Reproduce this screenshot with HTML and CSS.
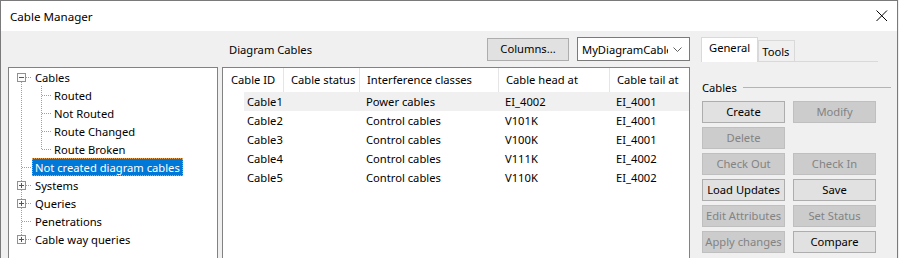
FILE: index.html
```html
<!DOCTYPE html>
<html>
<head>
<meta charset="utf-8">
<title>Cable Manager</title>
<link rel="stylesheet" href="styles.css">
</head>
<body>
<div class="window">
    <div class="titlebar">
        <span class="title">Cable Manager</span>
        <svg class="close" width="12" height="12" viewBox="0 0 12 12">
            <path d="M0.5 0.5 L11 11 M11 0.5 L0.5 11" stroke="#000" stroke-width="1"/>
        </svg>
    </div>
    <div class="client">
        <div class="main">
            <div class="toolbar">
                <span class="caption">Diagram Cables</span>
                <span class="spacer"></span>
                <button class="btn columns">Columns...</button>
                <div class="combo">
                    <span class="combo-text">MyDiagramCables</span>
                    <svg class="chevron" width="9" height="5" viewBox="0 0 9 5">
                        <path d="M0.5 0.5 L4.5 4.5 L8.5 0.5" fill="none" stroke="#606060"/>
                    </svg>
                </div>
            </div>
            <div class="panes">
                <div class="tree">
                    <!-- connector lines and expander boxes -->
                    <svg class="tree-lines" width="60" height="190">
                        <g stroke="#a0a0a0" stroke-dasharray="1 1" shape-rendering="crispEdges">
                            <line x1="12.5" y1="14" x2="12.5" y2="172"/>
                            <line x1="32.5" y1="18" x2="32.5" y2="82"/>
                            <line x1="17" y1="9.5" x2="23" y2="9.5"/>
                            <line x1="33" y1="27.5" x2="42" y2="27.5"/>
                            <line x1="33" y1="45.5" x2="42" y2="45.5"/>
                            <line x1="33" y1="63.5" x2="42" y2="63.5"/>
                            <line x1="33" y1="81.5" x2="42" y2="81.5"/>
                            <line x1="13" y1="99.5" x2="23" y2="99.5"/>
                            <line x1="17" y1="117.5" x2="23" y2="117.5"/>
                            <line x1="17" y1="135.5" x2="23" y2="135.5"/>
                            <line x1="13" y1="153.5" x2="23" y2="153.5"/>
                            <line x1="17" y1="171.5" x2="23" y2="171.5"/>
                        </g>
                        <g fill="#fcfcfc" stroke="#919191" shape-rendering="crispEdges">
                            <rect x="8.5" y="5.5" width="8" height="8"/>
                            <rect x="8.5" y="113.5" width="8" height="8"/>
                            <rect x="8.5" y="131.5" width="8" height="8"/>
                            <rect x="8.5" y="167.5" width="8" height="8"/>
                        </g>
                        <g stroke="#3a5a8a" shape-rendering="crispEdges">
                            <line x1="10" y1="9.5" x2="15" y2="9.5"/>
                            <line x1="10" y1="117.5" x2="15" y2="117.5"/>
                            <line x1="12.5" y1="115" x2="12.5" y2="120"/>
                            <line x1="10" y1="135.5" x2="15" y2="135.5"/>
                            <line x1="12.5" y1="133" x2="12.5" y2="138"/>
                            <line x1="10" y1="171.5" x2="15" y2="171.5"/>
                            <line x1="12.5" y1="169" x2="12.5" y2="174"/>
                        </g>
                    </svg>
                    <div class="node"><span class="label">Cables</span></div>
                    <div class="node child"><span class="label">Routed</span></div>
                    <div class="node child"><span class="label">Not Routed</span></div>
                    <div class="node child"><span class="label">Route Changed</span></div>
                    <div class="node child"><span class="label">Route Broken</span></div>
                    <div class="node"><span class="label selected">Not created diagram cables</span></div>
                    <div class="node"><span class="label">Systems</span></div>
                    <div class="node"><span class="label">Queries</span></div>
                    <div class="node"><span class="label">Penetrations</span></div>
                    <div class="node"><span class="label">Cable way queries</span></div>
                </div>
                <div class="list">
                    <div class="list-head">
                        <span class="col first">Cable ID</span>
                        <span class="col">Cable status</span>
                        <span class="col">Interference classes</span>
                        <span class="col">Cable head at</span>
                        <span class="col">Cable tail at</span>
                    </div>
                    <div class="list-row hot">
                        <span class="cell first">Cable1</span><span class="cell"></span>
                        <span class="cell">Power cables</span><span class="cell">EI_4002</span><span class="cell">EI_4001</span>
                    </div>
                    <div class="list-row">
                        <span class="cell first">Cable2</span><span class="cell"></span>
                        <span class="cell">Control cables</span><span class="cell">V101K</span><span class="cell">EI_4001</span>
                    </div>
                    <div class="list-row">
                        <span class="cell first">Cable3</span><span class="cell"></span>
                        <span class="cell">Control cables</span><span class="cell">V100K</span><span class="cell">EI_4001</span>
                    </div>
                    <div class="list-row">
                        <span class="cell first">Cable4</span><span class="cell"></span>
                        <span class="cell">Control cables</span><span class="cell">V111K</span><span class="cell">EI_4002</span>
                    </div>
                    <div class="list-row">
                        <span class="cell first">Cable5</span><span class="cell"></span>
                        <span class="cell">Control cables</span><span class="cell">V110K</span><span class="cell">EI_4002</span>
                    </div>
                </div>
            </div>
        </div>
        <div class="side">
            <div class="tabs">
                <span class="tab active">General</span>
                <span class="tab">Tools</span>
                <span class="tab-fill"></span>
            </div>
            <div class="group">
                <span>Cables</span>
                <span class="rule"></span>
            </div>
            <div class="buttons">
                <button class="btn">Create</button>
                <button class="btn" disabled>Modify</button>
                <button class="btn" disabled>Delete</button>
                <span></span>
                <button class="btn" disabled>Check Out</button>
                <button class="btn" disabled>Check In</button>
                <button class="btn">Load Updates</button>
                <button class="btn">Save</button>
                <button class="btn" disabled>Edit Attributes</button>
                <button class="btn" disabled>Set Status</button>
                <button class="btn" disabled>Apply changes</button>
                <button class="btn">Compare</button>
            </div>
        </div>
    </div>
</div>
</body>
</html>
```

FILE: styles.css
```css
body{
    margin:0;
    font-family:"Noto Sans", "DejaVu Sans", sans-serif;
    font-size:11.2px;
    color:#000;
    background-color:#f0f0f0;
    overflow:hidden;
}

.window{
    width:898px;
    height:300px;
    box-sizing:border-box;
    border:1px solid #7a7a7a;
    border-bottom:none;
    background-color:#f0f0f0;
}

.titlebar{
    height:30px;
    background-color:#fff;
    display:flex;
    align-items:center;
    padding-left:9px;
    padding-right:9px;
    font-size:11.6px;
}

.title{
    flex:1;
}

.close{
    display:block;
}

.client{
    display:flex;
    padding-left:7px;
}

.main{
    width:682px;
}

.toolbar{
    height:36px;
    display:flex;
    align-items:center;
}

.caption{
    margin-left:221px;
}

.spacer{
    flex:1;
}

.btn{
    font:inherit;
    color:#000;
    background-color:#e1e1e1;
    border:1px solid #adadad;
    height:22px;
    padding:0;
    margin:0;
    line-height:18px;
    white-space:nowrap;
}

.btn:disabled{
    background-color:#cccccc;
    border-color:#bfbfbf;
    color:#838383;
}

.columns{
    width:82px;
    height:23px;
    margin-right:8px;
}

.combo{
    width:113px;
    height:24px;
    box-sizing:border-box;
    background-color:#fff;
    border:1px solid #7a7a7a;
    display:flex;
    align-items:center;
    padding-left:4px;
}

.combo-text{
    width:86px;
    overflow:hidden;
    white-space:nowrap;
}

.chevron{
    margin-left:5px;
}

.panes{
    display:flex;
    gap:4px;
    height:200px;
}

.tree{
    width:210px;
    box-sizing:border-box;
    border:1px solid #828282;
    background-color:#fff;
    position:relative;
}

.tree-lines{
    position:absolute;
    left:0;
    top:0;
}

.node{
    height:18px;
    display:flex;
    align-items:center;
    padding-left:23px;
    position:relative;
}

.node.child{
    padding-left:42px;
}

.label{
    padding:0 2px;
    height:18px;
    line-height:17px;
    box-sizing:border-box;
    border:1px solid transparent;
    white-space:nowrap;
}

.label.selected{
    background-color:#0078d7;
    color:#fff;
    border:1px dotted #e8a050;
}

.list{
    width:468px;
    box-sizing:border-box;
    border:1px solid #828282;
    background-color:#fff;
}

.list-head, .list-row{
    display:grid;
    grid-template-columns:60px 76px 139px 111px 1fr;
}

.list-head{
    height:24px;
    line-height:23px;
}

.col{
    padding-left:7px;
    border-left:1px solid #e5e5e5;
    white-space:nowrap;
    overflow:hidden;
}

.col.first{
    padding-left:8px;
    border-left:none;
}

.list-row{
    height:19px;
    line-height:19px;
}

.list-row.hot{
    background:linear-gradient(to right, transparent 21px, #f0f0f0 21px);
}

.cell{
    padding-left:7px;
    white-space:nowrap;
}

.cell.first{
    padding-left:24px;
}

.side{
    width:190px;
    margin-left:11px;
}

.tabs{
    display:flex;
    align-items:flex-end;
    height:25px;
    margin-top:6px;
}

.tab{
    box-sizing:border-box;
    border:1px solid #d9d9d9;
    padding:0 5px 0 3px;
    height:22px;
    line-height:21px;
    background-color:#f0f0f0;
}

.tab.active{
    height:25px;
    line-height:19px;
    background-color:#fff;
    border-bottom:none;
    padding:0 7px;
}

.tab-fill{
    width:83px;
    border-bottom:1px solid #d9d9d9;
}

.group{
    display:flex;
    align-items:center;
    margin-top:17px;
    height:17px;
    padding-left:1px;
}

.rule{
    flex:1;
    margin-left:6px;
    border-top:1px solid #b4b4b4;
}

.buttons{
    display:grid;
    grid-template-columns:83px 83px;
    grid-auto-rows:22px;
    column-gap:8px;
    row-gap:4px;
    margin-top:5px;
    padding-left:1px;
}
```
